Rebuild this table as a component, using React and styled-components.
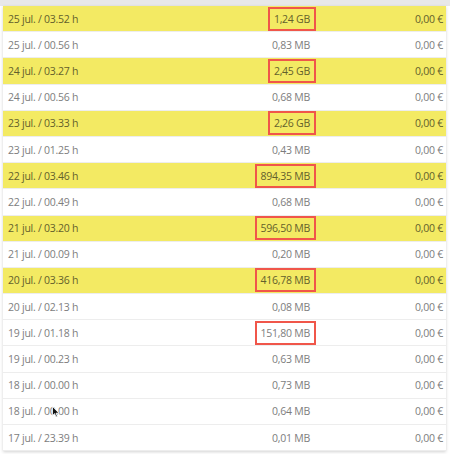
import React from "react";
import styled, { createGlobalStyle } from "styled-components";

const Global = createGlobalStyle`
  html, body { margin: 0; padding: 0; background: #ffffff; }
  body { font-family: "Open Sans", "Liberation Sans", sans-serif; }
`;

const Page = styled.div`
  width: 450px;
  height: 454px;
  overflow: hidden;
  background: #fff;
`;

const TopBand = styled.div`
  height: 6px;
  background: #e8e8e8;
`;

const Table = styled.div`
  margin: 0 4px 0 3px;
  background: #fff;
  box-shadow: 0 1px 3px rgba(0, 0, 0, 0.18);
  position: relative;
`;

const Row = styled.div`
  box-sizing: border-box;
  height: 26.2px;
  display: grid;
  grid-template-columns: 1fr 120px 130px;
  align-items: center;
  background: ${(p) => (p.$hl ? "#f3ea63" : "#ffffff")};
  border-bottom: 1px solid #ededed;
  color: ${(p) => (p.$hl ? "#63602c" : "#7d7d7d")};
  font-size: 10.5px;
  letter-spacing: -0.25px;
`;

const DateCell = styled.div`
  padding-left: 5px;
  white-space: nowrap;
`;

const SizeCell = styled.div`
  display: flex;
  justify-content: flex-end;
  padding-right: 0;
`;

const SizeText = styled.span`
  box-sizing: border-box;
  padding: ${(p) => (p.$boxed ? "3px 4px" : "5px 6px")};
  border: ${(p) => (p.$boxed ? "2px solid #f0564a" : "none")};
  line-height: 14px;
  white-space: nowrap;
`;

const PriceCell = styled.div`
  text-align: right;
  padding-right: 3px;
  white-space: nowrap;
`;

const Cursor = styled.svg`
  position: absolute;
  left: 49px;
  top: 400px;
`;

const rows = [
  ["25 jul. / 03.52 h", "1,24 GB", true],
  ["25 jul. / 00.56 h", "0,83 MB", false],
  ["24 jul. / 03.27 h", "2,45 GB", true],
  ["24 jul. / 00.56 h", "0,68 MB", false],
  ["23 jul. / 03.33 h", "2,26 GB", true],
  ["23 jul. / 01.25 h", "0,43 MB", false],
  ["22 jul. / 03.46 h", "894,35 MB", true],
  ["22 jul. / 00.49 h", "0,68 MB", false],
  ["21 jul. / 03.20 h", "596,50 MB", true],
  ["21 jul. / 00.09 h", "0,20 MB", false],
  ["20 jul. / 03.36 h", "416,78 MB", true],
  ["20 jul. / 02.13 h", "0,08 MB", false],
  ["19 jul. / 01.18 h", "151,80 MB", false, true],
  ["19 jul. / 00.23 h", "0,63 MB", false],
  ["18 jul. / 00.00 h", "0,73 MB", false],
  ["18 jul. / 00.00 h", "0,64 MB", false],
  ["17 jul. / 23.39 h", "0,01 MB", false],
];

export default function App() {
  return (
    <Page>
      <Global />
      <TopBand />
      <Table>
        {rows.map(([d, s, hl, boxOnly], i) => (
          <Row key={i} $hl={hl}>
            <DateCell>{d}</DateCell>
            <SizeCell>
              <SizeText $boxed={hl || boxOnly}>{s}</SizeText>
            </SizeCell>
            <PriceCell>0,00 €</PriceCell>
          </Row>
        ))}
        <Cursor width="8" height="12" viewBox="0 0 8 12">
          <path d="M0.5 0.5 L0.5 9.5 L2.6 7.6 L4 11 L5.4 10.4 L4 7.2 L7 7.2 Z" fill="#111" stroke="#fff" strokeWidth="0.8" />
        </Cursor>
      </Table>
    </Page>
  );
}
